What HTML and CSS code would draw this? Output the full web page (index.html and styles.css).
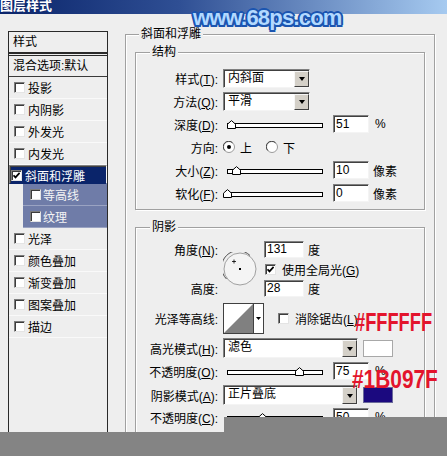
FILE: index.html
```html
<!DOCTYPE html>
<html>
<head>
<meta charset="utf-8">
<title>图层样式</title>
<link rel="stylesheet" href="styles.css">
</head>
<body>
<div class="titlebar"><span class="title">图层样式</span></div>
<div class="dialog">
  <div class="side">
    <div class="side-head">样式</div>
    <div class="side-list">
      <div class="opt">混合选项:默认</div>
      <div class="item"><span class="cb"></span>投影</div>
      <div class="item"><span class="cb"></span>内阴影</div>
      <div class="item"><span class="cb"></span>外发光</div>
      <div class="item"><span class="cb"></span>内发光</div>
      <div class="item sel"><span class="cb"><svg width="7" height="7" viewBox="0 0 7 7"><path d="M0.5 3.2 L2.5 5.4 L6.6 0.8" stroke="#000" stroke-width="1.7" fill="none"/></svg></span>斜面和浮雕</div>
      <div class="item sub"><span class="cb"></span>等高线</div>
      <div class="item sub"><span class="cb"></span>纹理</div>
      <div class="item"><span class="cb"></span>光泽</div>
      <div class="item"><span class="cb"></span>颜色叠加</div>
      <div class="item"><span class="cb"></span>渐变叠加</div>
      <div class="item"><span class="cb"></span>图案叠加</div>
      <div class="item"><span class="cb"></span>描边</div>
    </div>
  </div>
  <div class="main">
    <div class="grp outer">
      <div class="legend">斜面和浮雕</div>
      <div class="outer-body">
        <div class="grp inner">
          <div class="legend">结构</div>
          <div class="rows struct">
            <div class="row"><span class="lbl">样式(<u>T</u>):</span><div class="sel w87 ctl"><span class="val">内斜面</span><span class="btn"></span></div></div>
            <div class="row"><span class="lbl">方法(<u>Q</u>):</span><div class="sel w87 ctl"><span class="val">平滑</span><span class="btn"></span></div></div>
            <div class="row"><span class="lbl">深度(<u>D</u>):</span><div class="slider"><span class="thumb" style="left:-1px"><svg width="9" height="9" viewBox="0 0 9 9"><path d="M0.5 8.5 V4.2 L4.5 0.6 L8.5 4.2 V8.5 Z" fill="#fff" stroke="#000"/></svg></span></div><span class="inp">51</span><span class="unit u6">%</span></div>
            <div class="row"><span class="lbl">方向:</span><span class="radio ctl"><svg width="12" height="12" viewBox="0 0 12 12"><circle cx="6" cy="6" r="5.5" fill="#fff" stroke="#9a9a9a"/><path d="M1.8 9.5 A5 5 0 0 1 9.5 1.8" stroke="#404040" fill="none"/><circle cx="6" cy="6" r="2" fill="#000"/></svg></span><span class="rtxt">上</span><span class="radio r2"><svg width="12" height="12" viewBox="0 0 12 12"><circle cx="6" cy="6" r="5.5" fill="#fff" stroke="#9a9a9a"/><path d="M1.8 9.5 A5 5 0 0 1 9.5 1.8" stroke="#404040" fill="none"/></svg></span><span class="rtxt">下</span></div>
            <div class="row"><span class="lbl">大小(<u>Z</u>):</span><div class="slider"><span class="thumb" style="left:3.5px"><svg width="9" height="9" viewBox="0 0 9 9"><path d="M0.5 8.5 V4.2 L4.5 0.6 L8.5 4.2 V8.5 Z" fill="#fff" stroke="#000"/></svg></span></div><span class="inp">10</span><span class="unit">像素</span></div>
            <div class="row"><span class="lbl">软化(<u>F</u>):</span><div class="slider"><span class="thumb" style="left:-5.5px"><svg width="9" height="9" viewBox="0 0 9 9"><path d="M0.5 8.5 V4.2 L4.5 0.6 L8.5 4.2 V8.5 Z" fill="#fff" stroke="#000"/></svg></span></div><span class="inp">0</span><span class="unit">像素</span></div>
          </div>
        </div>
        <div class="grp inner shadow">
          <div class="legend">阴影</div>
          <div class="rows shade">
            <div class="angle">
              <span class="lbl a1">角度(<u>N</u>):</span>
              <span class="dial"><svg width="34" height="34" viewBox="0 0 34 34"><circle cx="17" cy="17" r="16" fill="#f4f4f4" stroke="#a0a0a0"/><path d="M3.5 27 A16 16 0 0 1 27 3.5" stroke="#505050" fill="none"/><path d="M9 9.5 H13 M11 7.5 V11.5" stroke="#000" stroke-width="0.8"/><rect x="16" y="16" width="2" height="2" fill="#000"/></svg></span>
              <span class="cell c1"><span class="inp w40">131</span><span class="unit">度</span></span>
              <span class="cell c2"><span class="cb"><svg width="7" height="7" viewBox="0 0 7 7"><path d="M0.5 3.2 L2.5 5.4 L6.6 0.8" stroke="#000" stroke-width="1.7" fill="none"/></svg></span><span class="cbt">使用全局光(<u>G</u>)</span></span>
              <span class="lbl a3">高度:</span>
              <span class="cell c3"><span class="inp w40">28</span><span class="unit">度</span></span>
            </div>
            <div class="row h30"><span class="lbl">光泽等高线:</span><span class="contour ctl"><svg width="41" height="31" viewBox="0 0 41 31"><rect x="0.5" y="0.5" width="40" height="30" fill="#fff" stroke="#404040"/><path d="M1 30 L30 1 V30 Z" fill="#808080"/><path d="M30.5 1 V30" stroke="#404040"/><path d="M33 14 H38 L35.5 17 Z" fill="#000"/></svg></span><span class="cb cb14"></span><span class="cbt">消除锯齿(<u>L</u>)</span></div>
            <div class="row h20 m5"><span class="lbl">高光模式(<u>H</u>):</span><div class="sel w135 ctl"><span class="val">滤色</span><span class="btn"></span></div><span class="swatch white"></span></div>
            <div class="row h18 m4"><span class="lbl">不透明度(<u>O</u>):</span><div class="slider"><span class="thumb" style="left:66.5px"><svg width="9" height="9" viewBox="0 0 9 9"><path d="M0.5 8.5 V4.2 L4.5 0.6 L8.5 4.2 V8.5 Z" fill="#fff" stroke="#000"/></svg></span></div><span class="inp">75</span><span class="unit u6">%</span></div>
            <div class="row h20 m5"><span class="lbl">阴影模式(<u>A</u>):</span><div class="sel w135 ctl"><span class="val">正片叠底</span><span class="btn"></span></div><span class="swatch navy"></span></div>
            <div class="row h18 m3"><span class="lbl">不透明度(<u>C</u>):</span><div class="slider"><span class="thumb" style="left:29.5px"><svg width="9" height="9" viewBox="0 0 9 9"><path d="M0.5 8.5 V4.2 L4.5 0.6 L8.5 4.2 V8.5 Z" fill="#fff" stroke="#000"/></svg></span></div><span class="inp">50</span><span class="unit u6">%</span></div>
          </div>
        </div>
      </div>
    </div>
  </div>
</div>
<div class="watermark">www.68ps.com</div>
<div class="note n1">#FFFFFF</div>
<div class="note n2">#1B097F</div>
<div class="cover c-top"></div>
<div class="cover c-bottom"></div>
</body>
</html>
```
FILE: styles.css
```css
* { box-sizing: border-box; }
html, body { margin: 0; padding: 0; }
body {
  width: 447px;
  height: 456px;
  overflow: hidden;
  position: relative;
  background: #eeeeee;
  font-family: "Liberation Sans", "Noto Sans CJK SC", sans-serif;
  font-size: 12px;
  color: #000;
}
u { text-decoration: underline; text-underline-offset: 1px; }

.titlebar {
  height: 14px;
  background: linear-gradient(to right, #0a246a 0%, #2f4f94 40%, #a6caf0 100%);
  overflow: hidden;
}
.title {
  display: block;
  color: #fff;
  font-weight: bold;
  font-size: 13px;
  line-height: 9px;
  font-family: "Noto Sans CJK SC", sans-serif;
}

.dialog { display: flex; padding: 13px 0 0 8px; }

/* left list */
.side { width: 100px; flex: none; margin-top: 4px; }
.side-head {
  height: 22px;
  border: 1px solid #2a2a2a;
  padding-left: 4px;
  line-height: 20px;
}
.side-list {
  height: 420px;
  border: 1px solid #2a2a2a;
  border-top: 3px double #2a2a2a;
}
.opt {
  height: 21px;
  line-height: 20px;
  padding-left: 4px;
  border-bottom: 1px solid #3a3a3a;
}
.item {
  height: 22px;
  display: flex;
  align-items: center;
  gap: 3px;
  padding-left: 5px;
  border-bottom: 1px solid #f9f9f9;
}
.item.sel { background: #0a246a; color: #fff; border-bottom-color: #0a246a; }
.item.sub {
  margin-left: 14px;
  padding-left: 7px;
  gap: 2px;
  background: #6f7ca8;
  color: #f4f4f4;
  border-bottom-color: #9aa3c2;
}

.cb {
  width: 11px;
  height: 11px;
  flex: none;
  display: inline-flex;
  align-items: center;
  justify-content: center;
  background: #fff;
  border: 1px solid;
  border-color: #7c7c7c #e4e4e4 #e4e4e4 #7c7c7c;
  box-shadow: inset 1px 1px 0 #3c3c3c;
}
.cb svg { display: block; }

/* right: etched group boxes */
.main { margin-left: 17px; width: 310px; flex: none; }
.grp {
  border: 1px solid #a0a0a0;
  box-shadow: inset 1px 1px 0 #fff, 1px 1px 0 #fff;
}
.outer { margin-top: 7px; }
.legend {
  width: fit-content;
  height: 14px;
  line-height: 14px;
  padding: 0 2px;
  margin: -8px 0 0 13px;
  background: #eeeeee;
  white-space: nowrap;
}
.inner > .legend { margin-left: 14px; }
.outer-body { padding: 11px 9px 0; }
.shadow { margin-top: 17px; }

.rows { display: flex; flex-direction: column; }
.struct { gap: 3px; padding: 9px 0 6px; }
.shade { padding: 7px 0 20px; }

.row { display: flex; align-items: center; height: 20px; flex: none; }
.row.h30 { height: 30px; margin-top: 6px; }
.row.h20 { height: 20px; }
.row.h18 { height: 18px; }
.m5 { margin-top: 5px; }
.m4 { margin-top: 4px; }
.m3 { margin-top: 3px; }

.lbl { width: 82px; flex: none; text-align: right; white-space: nowrap; }
.ctl { margin-left: 5px; }

.sel {
  display: flex;
  height: 19px;
  padding: 1px 0 0 1px;
  background: #fff;
  border: 1px solid;
  border-color: #808080 #f4f4f4 #f4f4f4 #808080;
  box-shadow: inset 1px 1px 0 #404040;
}
.w87 { width: 87px; }
.w135 { width: 135px; height: 20px; }
.val { flex: 1; padding-left: 3px; line-height: 15px; white-space: nowrap; }
.btn {
  width: 15px;
  flex: none;
  display: flex;
  align-items: center;
  justify-content: center;
  background: #d4d0c8;
  border: 1px solid;
  border-color: #f6f6f6 #404040 #404040 #f6f6f6;
}
.btn::after {
  content: "";
  border-left: 3.5px solid transparent;
  border-right: 3.5px solid transparent;
  border-top: 4px solid #000;
}

.slider {
  position: relative;
  width: 96px;
  height: 5px;
  margin: 2px 0 0 9px;
  flex: none;
  background: #fff;
  border: 1px solid #000;
}
.thumb { position: absolute; bottom: -2px; width: 9px; height: 9px; }
.thumb svg { display: block; }

.inp {
  width: 36px;
  height: 18px;
  flex: none;
  margin-left: 10px;
  padding-left: 2px;
  line-height: 16px;
  background: #fff;
  border: 1px solid;
  border-color: #808080 #f4f4f4 #f4f4f4 #808080;
  box-shadow: inset 1px 1px 0 #404040;
}
.inp.w40 { width: 40px; height: 17px; margin-left: 0; line-height: 15px; }
.unit { margin-left: 4px; white-space: nowrap; }
.u6 { margin-left: 6px; }

.radio { display: block; width: 12px; height: 12px; flex: none; }
.radio svg { display: block; }
.radio.r2 { margin-left: 14px; }
.rtxt { margin-left: 5px; }

.angle {
  display: grid;
  grid-template-columns: 82px 34px auto;
  grid-template-rows: 17px 22px 17px;
  column-gap: 5px;
  align-items: center;
}
.a1 { grid-column: 1; grid-row: 1; }
.a3 { grid-column: 1; grid-row: 3; }
.dial { grid-column: 2; grid-row: 1 / 4; width: 34px; height: 34px; }
.dial svg { display: block; }
.cell { display: flex; align-items: center; margin-left: 2px; grid-column: 3; }
.c1 { grid-row: 1; }
.c2 { grid-row: 2; padding-left: 1px; }
.c3 { grid-row: 3; }
.cbt { margin-left: 6px; white-space: nowrap; }
.cb14 { margin-left: 14px; }

.contour { display: block; width: 41px; height: 31px; }
.contour svg { display: block; }

.swatch {
  width: 30px;
  height: 17px;
  margin-left: 5px;
  flex: none;
  border: 1px solid #a8a8a8;
}
.swatch.white { background: #fff; }
.swatch.navy { background: #1b097f; border-color: #6a6a9a; height: 16px; }

/* overlays */
.watermark {
  position: absolute;
  left: 193px;
  top: 7px;
  font-family: "Liberation Sans", sans-serif;
  font-weight: bold;
  font-size: 22px;
  line-height: 22px;
  letter-spacing: -0.8px;
  color: #b2d9ff;
  text-shadow:
    2px 0 0 #1b55b0, -2px 0 0 #1b55b0, 0 2px 0 #1b55b0, 0 -2px 0 #1b55b0,
    1.5px 1.5px 0 #1b55b0, -1.5px 1.5px 0 #1b55b0, 1.5px -1.5px 0 #1b55b0, -1.5px -1.5px 0 #1b55b0;
}
.note {
  position: absolute;
  font-family: "Liberation Sans", sans-serif;
  font-weight: bold;
  font-size: 25px;
  line-height: 25px;
  color: #e3142c;
  transform-origin: 0 0;
  white-space: nowrap;
}
.n1 { left: 355px; top: 310px; transform: scaleX(0.73); }
.n2 { left: 352px; top: 367px; transform: scaleX(0.835); }

.cover { position: absolute; background: #848484; }
.c-top { left: 224px; right: 0; top: 417px; height: 15px; }
.c-bottom { left: 0; right: 0; top: 432px; bottom: 0; }
```
